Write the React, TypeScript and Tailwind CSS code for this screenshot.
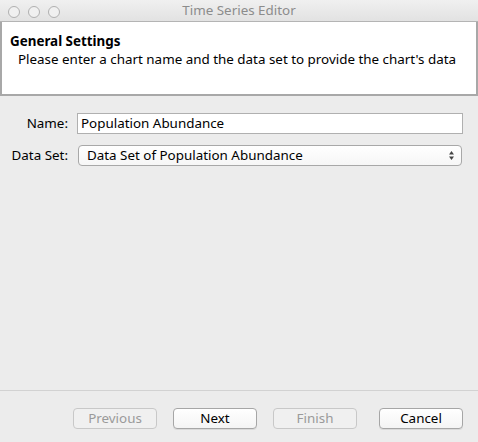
import React from "react";

const font = { fontFamily: '"Noto Sans", "DejaVu Sans", sans-serif' };

function Btn({ label, disabled }: { label: string; disabled?: boolean }) {
  return (
    <div
      className={`w-[84px] h-[21px] rounded-[4px] border flex items-center justify-center text-[13.4px] ${
        disabled
          ? "border-[#c8c8c8] bg-[#f0f0f0] text-[#9a9a9a]"
          : "border-[#a6a6a6] bg-gradient-to-b from-white to-[#f4f4f4] text-black shadow-[0_1px_0_rgba(0,0,0,0.08)]"
      }`}
    >
      {label}
    </div>
  );
}

export default function App() {
  return (
    <div className="w-[478px] h-[442px] bg-[#ececec] flex flex-col overflow-hidden" style={font}>
      <div className="h-[22px] relative flex items-center justify-center bg-gradient-to-b from-[#f0f0f0] to-[#e2e2e2] border-b border-[#b4b4b4]">
        <div className="absolute left-[8px] top-[6px] flex gap-[8px]">
          <div className="w-[12px] h-[12px] rounded-full border border-[#b0b0b0] bg-[#f0f0f0]" />
          <div className="w-[12px] h-[12px] rounded-full border border-[#b0b0b0] bg-[#f0f0f0]" />
          <div className="w-[12px] h-[12px] rounded-full border border-[#b0b0b0] bg-[#f0f0f0]" />
        </div>
        <span className="text-[13.4px] text-[#8c8c8c] leading-none">Time Series Editor</span>
      </div>
      <div className="h-[74px] bg-white border-x-2 border-b-2 border-[#a8a8a8] pt-[10px] pl-[8px]">
        <div className="text-[13.4px] font-bold text-black leading-[18px]">General Settings</div>
        <div className="text-[13.4px] text-black leading-[18px] pl-[8px]">
          Please enter a chart name and the data set to provide the chart's data
        </div>
      </div>
      <div className="flex-1 flex flex-col pt-[17px] pl-[10px] pr-[15px] gap-[11px]">
        <div className="flex items-center h-[21px]">
          <div className="w-[58px] text-right text-[13.4px] text-black">Name:</div>
          <div className="ml-[9px] flex-1 h-[21px] bg-white border border-[#b0b0b0] flex items-center pl-[3px] text-[13.4px] text-black">
            Population Abundance
          </div>
        </div>
        <div className="flex items-center h-[21px]">
          <div className="w-[58px] text-right text-[13.4px] text-black">Data Set:</div>
          <div className="ml-[10px] mr-[1px] flex-1 h-[21px] rounded-[4px] bg-gradient-to-b from-white to-[#f6f6f6] border border-[#a8a8a8] flex items-center pl-[8px] pr-[6px] text-[13.4px] text-black">
            <span className="flex-1">Data Set of Population Abundance</span>
            <svg width="7" height="11" viewBox="0 0 7 11">
              <path d="M3.5 1 L6 4.5 L1 4.5 Z" fill="#444" />
              <path d="M3.5 10 L6 6.5 L1 6.5 Z" fill="#444" />
            </svg>
          </div>
        </div>
      </div>
      <div className="h-px bg-[#d2d2d2]" />
      <div className="h-[51px] flex items-start pt-[17px] pl-[73px] gap-[16px]">
        <Btn label="Previous" disabled />
        <Btn label="Next" />
        <Btn label="Finish" disabled />
        <div className="ml-[6px]">
          <Btn label="Cancel" />
        </div>
      </div>
    </div>
  );
}
